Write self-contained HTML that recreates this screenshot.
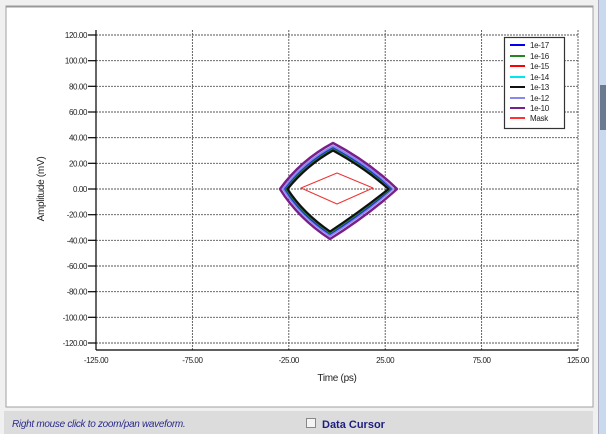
<!DOCTYPE html>
<html><head><style>
html,body{margin:0;padding:0;width:606px;height:434px;background:#f0f0f0;overflow:hidden;font-family:"Liberation Sans",sans-serif}
</style></head><body>
<svg width="606" height="434" viewBox="0 0 606 434" xmlns="http://www.w3.org/2000/svg" style="position:absolute;left:0;top:0">
<rect x="0" y="0" width="606" height="434" fill="#f0f0f0"/>
<rect x="6" y="6" width="587" height="401" fill="#fff" stroke="#a0a0a0" stroke-width="1"/>
<line x1="6" y1="6.5" x2="593" y2="6.5" stroke="#999" stroke-width="2"/>
<rect x="598" y="0" width="8" height="434" fill="#c9daef"/>
<line x1="598.5" y1="0" x2="598.5" y2="434" stroke="#aab" />
<rect x="600" y="85" width="6" height="45" fill="#6a7a90"/>
<rect x="4" y="411" width="589" height="23" fill="#dcdcdc"/>
<text x="12" y="427" font-size="10" font-style="italic" fill="#2b2b8c" letter-spacing="-0.3">Right mouse click to zoom/pan waveform.</text>
<rect x="306.5" y="418.5" width="9" height="9" fill="#f4f4f4" stroke="#888"/>
<text x="322" y="428" font-size="11" font-weight="bold" fill="#1e1e80">Data Cursor</text>
<g stroke="#555" stroke-width="0.9" stroke-dasharray="2,1" fill="none">
<line x1="96" y1="35" x2="578" y2="35"/><line x1="96" y1="60.7" x2="578" y2="60.7"/><line x1="96" y1="86.3" x2="578" y2="86.3"/><line x1="96" y1="112" x2="578" y2="112"/><line x1="96" y1="137.7" x2="578" y2="137.7"/><line x1="96" y1="163.3" x2="578" y2="163.3"/><line x1="96" y1="189" x2="578" y2="189"/><line x1="96" y1="214.7" x2="578" y2="214.7"/><line x1="96" y1="240.3" x2="578" y2="240.3"/><line x1="96" y1="266" x2="578" y2="266"/><line x1="96" y1="291.7" x2="578" y2="291.7"/><line x1="96" y1="317.3" x2="578" y2="317.3"/><line x1="96" y1="343" x2="578" y2="343"/>
<line x1="192.4" y1="30" x2="192.4" y2="350"/><line x1="288.8" y1="30" x2="288.8" y2="350"/><line x1="385.2" y1="30" x2="385.2" y2="350"/><line x1="481.6" y1="30" x2="481.6" y2="350"/><line x1="578" y1="30" x2="578" y2="350"/>
</g>
<g stroke="#000" stroke-width="1.2">
<line x1="96" y1="30" x2="96" y2="350"/><line x1="96" y1="350" x2="578" y2="350"/>
<line x1="88" y1="35" x2="96" y2="35"/><line x1="88" y1="60.7" x2="96" y2="60.7"/><line x1="88" y1="86.3" x2="96" y2="86.3"/><line x1="88" y1="112" x2="96" y2="112"/><line x1="88" y1="137.7" x2="96" y2="137.7"/><line x1="88" y1="163.3" x2="96" y2="163.3"/><line x1="88" y1="189" x2="96" y2="189"/><line x1="88" y1="214.7" x2="96" y2="214.7"/><line x1="88" y1="240.3" x2="96" y2="240.3"/><line x1="88" y1="266" x2="96" y2="266"/><line x1="88" y1="291.7" x2="96" y2="291.7"/><line x1="88" y1="317.3" x2="96" y2="317.3"/><line x1="88" y1="343" x2="96" y2="343"/>
</g>
<g font-size="8" fill="#222" text-anchor="end" letter-spacing="-0.4">
<text x="87" y="38">120.00</text><text x="87" y="63.7">100.00</text><text x="87" y="89.3">80.00</text><text x="87" y="115">60.00</text><text x="87" y="140.7">40.00</text><text x="87" y="166.3">20.00</text><text x="87" y="192">0.00</text><text x="87" y="217.7">-20.00</text><text x="87" y="243.3">-40.00</text><text x="87" y="269">-60.00</text><text x="87" y="294.7">-80.00</text><text x="87" y="320.3">-100.00</text><text x="87" y="346">-120.00</text>
</g>
<g font-size="8" fill="#222" text-anchor="middle" letter-spacing="-0.4">
<text x="96" y="363">-125.00</text><text x="192.4" y="363">-75.00</text><text x="288.8" y="363">-25.00</text><text x="385.2" y="363">25.00</text><text x="481.6" y="363">75.00</text><text x="578" y="363">125.00</text>
</g>
<text x="337" y="381" font-size="10" fill="#222" text-anchor="middle" letter-spacing="-0.3">Time (ps)</text>
<text transform="translate(44,189) rotate(-90)" font-size="10" fill="#222" text-anchor="middle" letter-spacing="-0.3">Amplitude (mV)</text>
<g fill="none" stroke-linejoin="round">
<path d="M280,189 Q301,160 333,143 Q369,162 397,189 Q367,216 330,239 Q298,218 280,189Z" stroke="#7a1f8a" stroke-width="2.5"/>
<path d="M283,189 Q303,162 333,146 Q368,164 393,189 Q365,214 330,236 Q300,216 283,189Z" stroke="#8888ee" stroke-width="2"/>
<path d="M285,189 Q305,163 333,148 Q367,166 391,189 Q363,213 330,234 Q301,215 285,189Z" stroke="#2233cc" stroke-width="1.8"/>
<path d="M286,189 Q306,164 333,149 Q366,167 390,189 Q362,212 330,233 Q302,214 286,189Z" stroke="#228833" stroke-width="1.5"/>
<path d="M287.5,189 Q307,165 333,150.5 Q365,168 388.5,189 Q361,211 330,231.5 Q303,213 287.5,189Z" stroke="#111" stroke-width="2.2"/>
<path d="M301,188 L337,173 L373,188 L337,204 Z" stroke="#ee3333" stroke-width="1"/>
</g>
<rect x="504.5" y="37.5" width="60" height="91" fill="#fff" stroke="#333" stroke-width="1.2"/>
<g stroke-width="2">
<line x1="510" y1="45" x2="525" y2="45" stroke="#0000ee"/>
<line x1="510" y1="56" x2="525" y2="56" stroke="#228822"/>
<line x1="510" y1="66" x2="525" y2="66" stroke="#ff0000"/>
<line x1="510" y1="77" x2="525" y2="77" stroke="#00e8ee"/>
<line x1="510" y1="87" x2="525" y2="87" stroke="#111"/>
<line x1="510" y1="98" x2="525" y2="98" stroke="#8888ee"/>
<line x1="510" y1="108" x2="525" y2="108" stroke="#7a1f8a"/>
<line x1="510" y1="118" x2="525" y2="118" stroke="#ff3333"/>
</g>
<g font-size="8" fill="#222" letter-spacing="-0.3">
<text x="530" y="48">1e-17</text><text x="530" y="59">1e-16</text><text x="530" y="69">1e-15</text><text x="530" y="80">1e-14</text><text x="530" y="90">1e-13</text><text x="530" y="101">1e-12</text><text x="530" y="111">1e-10</text><text x="530" y="121">Mask</text>
</g>
</svg>
</body></html>
